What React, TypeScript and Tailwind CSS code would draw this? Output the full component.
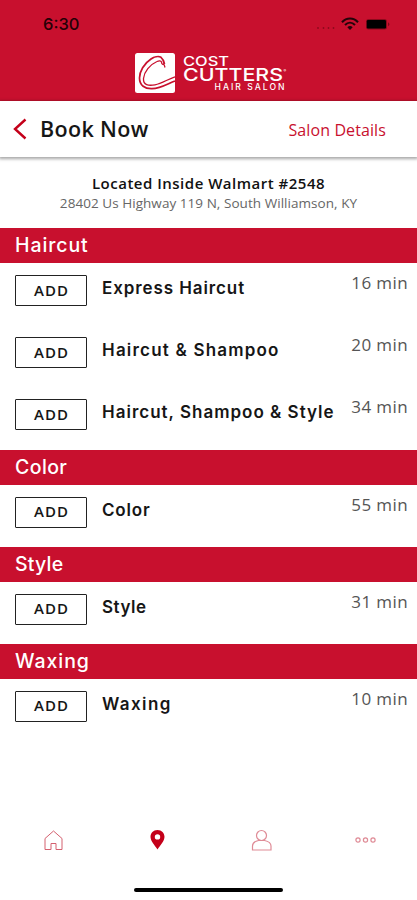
import React from 'react';

const sections = [
  {
    title: 'Haircut',
    titleClass: 'tracking-[0.9px]',
    services: [
      { name: 'Express Haircut', time: 16, nameClass: 'tracking-[0.9px]' },
      { name: 'Haircut & Shampoo', time: 20, nameClass: 'tracking-[1.2px]' },
      { name: 'Haircut, Shampoo & Style', time: 34, nameClass: 'tracking-[1px]' },
    ],
  },
  {
    title: 'Color',
    titleClass: 'tracking-[0.4px]',
    services: [{ name: 'Color', time: 55, nameClass: 'tracking-[0.8px]' }],
  },
  {
    title: 'Style',
    titleClass: 'tracking-[0.2px]',
    services: [{ name: 'Style', time: 31, nameClass: 'tracking-[0.5px]' }],
  },
  {
    title: 'Waxing',
    titleClass: 'tracking-[0.95px]',
    services: [{ name: 'Waxing', time: 10, nameClass: 'tracking-[1.4px]' }],
  },
];

const StatusBar = () => (
  <div className="flex h-12 items-center justify-between pr-[26px] pl-[43px]">
    <span className="font-['Inter'] text-[16.5px] font-medium text-[#250006]">
      6:30
    </span>
    <svg width="76" height="16" viewBox="0 0 76 16">
      <g fill="#8d0a1c">
        <circle cx="3" cy="12" r="0.9" />
        <circle cx="8.5" cy="12" r="0.9" />
        <circle cx="13.5" cy="12" r="0.9" />
        <circle cx="18.5" cy="12" r="0.9" />
      </g>
      <g fill="none" stroke="#22040a" strokeWidth="2.1">
        <path d="M27 6.2C31.5 1.3 38.5 1.3 43 6.2" />
        <path d="M30 9C33 6 37 6 40 9" />
      </g>
      <path d="M32.3 11.3C34 9.7 36 9.7 37.7 11.3L35 14Z" fill="#22040a" />
      <rect x="51" y="3" width="21" height="10.5" rx="2.5" fill="#8c0a1c" />
      <rect x="51.8" y="4" width="19.2" height="8.5" rx="1.2" fill="#000" />
      <path d="M73.3 6.2Q75.4 8.2 73.3 10.3Z" fill="#5f0612" />
    </svg>
  </div>
);

const Logo = () => (
  <svg width="153" height="42" viewBox="0 0 153 42" className="ml-[134px]">
    <rect x="1" y="1" width="40" height="40" rx="2.5" fill="#fff" />
    <g fill="none" stroke="#c8102e">
      <path
        d="M31 15.5C30.5 14 30.5 13 29.5 12C28.5 13 27.5 11.5 27.5 10C27 8.5 25 8.5 23 9.5C16 12.5 10 20 9.5 26.5C9 33 14.5 34 21 32.8C28 31.5 34 27 41 24.8"
        strokeWidth="1.3"
      />
      <path
        d="M30.5 12C30 9.5 28.5 6.5 27 5.3C24.5 4 20 5 17 7C10 11.5 5.5 19.5 5.5 26C5.5 33.5 11 37 18 36.7C27 36.3 34 31.5 41 29"
        strokeWidth="1.7"
      />
    </g>
    <g fill="#fff" fontFamily="Inter, sans-serif" fontWeight="500">
      <text x="49" y="14" fontSize="12.8" textLength="46" lengthAdjust="spacingAndGlyphs">
        COST
      </text>
      <text x="49" y="29.3" fontSize="17.5" textLength="100" lengthAdjust="spacingAndGlyphs">
        CUTTERS
      </text>
      <text x="149.5" y="20" fontSize="4">
        ®
      </text>
      <text x="80.5" y="38.3" fontSize="8.6" textLength="70" lengthAdjust="spacing">
        HAIR SALON
      </text>
    </g>
  </svg>
);

const ServiceRow = ({ name, time, nameClass }: any) => (
  <div className="flex h-[62.2px] items-start pr-[10px] pl-[15px]">
    <button
      type="button"
      className="mt-[12px] h-[31px] w-[72px] rounded-[1px] border-[1.5px] border-[#222] pb-[2px] pl-px font-['Open_Sans'] text-[15px] leading-[26px] font-semibold tracking-[1px] text-[#161616]"
    >
      ADD
    </button>
    <span
      className={`mt-[13px] ml-[15px] font-['Inter'] text-[17px] leading-6 font-semibold whitespace-nowrap text-[#161616] ${nameClass}`}
    >
      {name}
    </span>
    <span className="mt-[8px] -mr-px ml-auto font-['Open_Sans'] text-[17px] leading-6 tracking-[0.4px] whitespace-nowrap text-[#555]">
      {time} min
    </span>
  </div>
);

const TabBar = () => (
  <div className="grid grid-cols-4 items-center pl-px">
    <svg width="24" height="24" viewBox="0 0 24 24" className="justify-self-center" fill="none" stroke="#d4606f" strokeWidth="1">
      <path d="M4 21.5V10.5L12.5 3L21 10.5V21.5H15V15.5H10V21.5Z" />
    </svg>
    <svg width="24" height="24" viewBox="0 0 24 24" className="justify-self-center">
      <path
        d="M12.5 2C8.3 2 5.5 5 5.5 8.8C5.5 13 9.5 17 12.5 21.5C15.5 17 19.5 13 19.5 8.8C19.5 5 16.7 2 12.5 2ZM12.5 6.2A2.7 2.7 0 1 1 12.5 11.6A2.7 2.7 0 0 1 12.5 6.2Z"
        fill="#c4001a"
        fillRule="evenodd"
      />
    </svg>
    <svg width="24" height="24" viewBox="0 0 24 24" className="justify-self-center" fill="none" stroke="#df8b96" strokeWidth="1.2">
      <circle cx="12.5" cy="7.5" r="5" />
      <path d="M9.5 12.5C5.5 13.3 3.5 15 3.5 18V22H22V18C22 15 19.5 13.3 15.5 12.5Z" />
    </svg>
    <svg width="24" height="24" viewBox="0 0 24 24" className="justify-self-center" fill="none" stroke="#df8b96" strokeWidth="1.2">
      <circle cx="5" cy="12" r="2.1" />
      <circle cx="12.5" cy="12" r="2.1" />
      <circle cx="20" cy="12" r="2.1" />
    </svg>
  </div>
);

const App = () => (
  <div className="flex h-[900px] w-[417px] flex-col overflow-hidden bg-white">
    <header className="h-[101px] shrink-0 bg-[#c8102e]">
      <StatusBar />
      <div className="pt-1">
        <Logo />
      </div>
    </header>

    <div className="flex h-[56px] shrink-0 items-center bg-white pr-[31px] pl-[13px] shadow-[0_1px_3px_1px_rgba(0,0,0,0.35)]">
      <svg width="14" height="22" viewBox="0 0 14 22" fill="none" stroke="#c4001a" strokeWidth="2.4">
        <path d="M12.5 1.5L2 11L12.5 20.5" />
      </svg>
      <h1 className="mt-px ml-[13px] font-['Open_Sans'] text-[21.5px] font-semibold tracking-[0.35px] text-[#161616]">
        Book Now
      </h1>
      <a className="mt-px ml-auto font-['Open_Sans'] text-[16px] tracking-[0.1px] text-[#c8102e]">
        Salon Details
      </a>
    </div>

    <div className="h-[71px] shrink-0 pt-[16px] text-center font-['Open_Sans'] whitespace-nowrap">
      <p className="text-[15px] leading-5 font-semibold tracking-[0.5px] text-[#111]">
        Located Inside Walmart #2548
      </p>
      <p className="text-[13.5px] leading-5 tracking-[0.05px] text-[#666]">
        28402 Us Highway 119 N, South Williamson, KY
      </p>
    </div>

    <main>
      {sections.map((section) => (
        <section key={section.title}>
          <h2
            className={`h-[35px] bg-[#c8102e] pl-[15px] font-['Inter'] text-[19.5px] leading-[35px] font-medium text-white ${section.titleClass}`}
          >
            {section.title}
          </h2>
          {section.services.map((service) => (
            <ServiceRow key={service.name} {...service} />
          ))}
        </section>
      ))}
    </main>

    <footer className="mt-auto flex h-[72px] shrink-0 flex-col">
      <TabBar />
      <div className="mx-auto mt-[36px] h-[4px] w-[149px] rounded-full bg-black" />
    </footer>
  </div>
);

export default App;
